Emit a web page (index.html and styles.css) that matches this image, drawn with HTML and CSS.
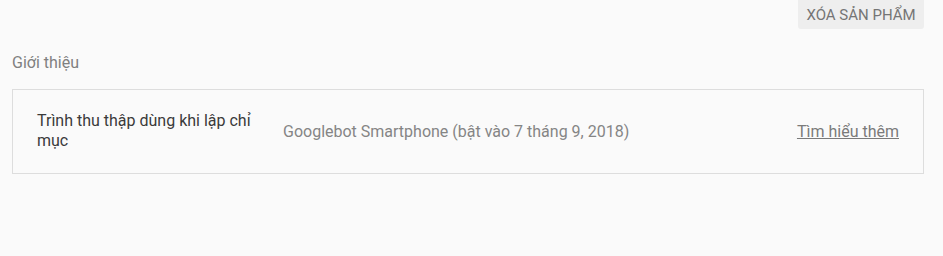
FILE: index.html
```html
<!DOCTYPE html>
<html lang="vi">
<head>
<meta charset="utf-8">
<link rel="stylesheet" href="styles.css">
</head>
<body>
<div class="page">
  <div class="toolbar">
    <button class="btn-remove">Xóa sản phẩm</button>
  </div>
  <div class="section-title">Giới thiệu</div>
  <div class="card">
    <div class="row">
      <div class="label">Trình thu thập dùng khi lập chỉ mục</div>
      <div class="value">Googlebot Smartphone (bật vào 7 tháng 9, 2018)</div>
      <a class="link" href="#">Tìm hiểu thêm</a>
    </div>
  </div>
</div>
</body>
</html>
```
FILE: styles.css
```css
html, body {
  margin: 0;
  padding: 0;
  background: #fafafa;
  font-family: Roboto, "Noto Sans", sans-serif;
}
.page {
  padding: 0 19px 0 12px;
}
.toolbar {
  display: flex;
  justify-content: flex-end;
  height: 29px;
}
.btn-remove {
  font-family: Roboto, sans-serif;
  font-size: 15px;
  text-transform: uppercase;
  color: #757575;
  background: #eeeeee;
  border: none;
  border-radius: 0 0 3px 3px;
  padding: 0;
  height: 29px;
  width: 126px;
}
.section-title {
  margin-top: 23px;
  font-size: 16px;
  color: #808080;
  line-height: 22px;
}
.card {
  margin-top: 15px;
  border: 1px solid #dddddd;
}
.row {
  display: flex;
  align-items: center;
  padding: 21px 24px 22px 24px;
  font-size: 16px;
}
.label {
  width: 222px;
  color: #3a3a3a;
  line-height: 20px;
  margin-right: 24px;
}
.value {
  flex: 1;
  color: #858585;
}
.link {
  color: #7a7a7a;
  text-decoration: underline;
}
```
